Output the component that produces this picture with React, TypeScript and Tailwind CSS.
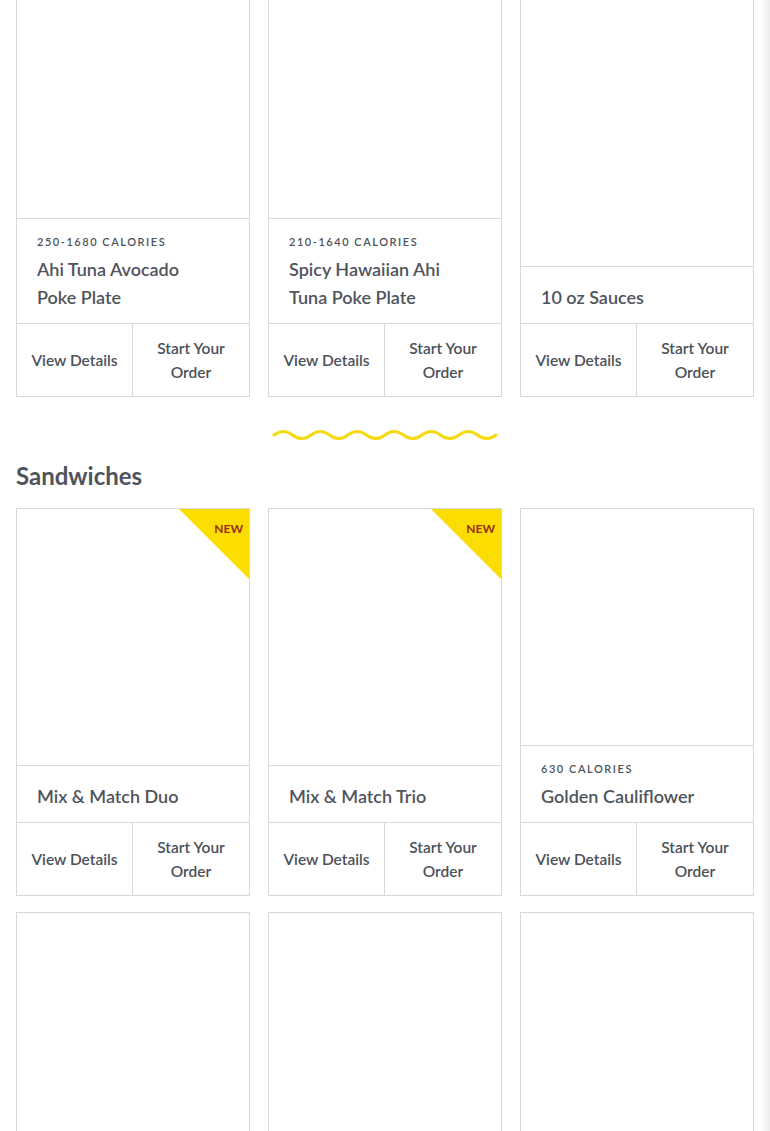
import React from "react";

type Item = { cal?: string; title: string[]; isNew?: boolean };

const row1: Item[] = [
  { cal: "250-1680 CALORIES", title: ["Ahi Tuna Avocado", "Poke Plate"] },
  { cal: "210-1640 CALORIES", title: ["Spicy Hawaiian Ahi", "Tuna Poke Plate"] },
  { title: ["10 oz Sauces"] },
];

const row2: Item[] = [
  { title: ["Mix & Match Duo"], isNew: true },
  { title: ["Mix & Match Trio"], isNew: true },
  { cal: "630 CALORIES", title: ["Golden Cauliflower"] },
];

function Card({ item }: { item: Item }) {
  return (
    <div className="relative flex flex-col border border-[#d8d8d8] bg-white">
      {item.isNew && (
        <div className="absolute right-0 top-0 h-[70px] w-[70px] bg-[#fbdd00] [clip-path:polygon(0_0,100%_0,100%_100%)]">
          <span className="absolute right-[6px] top-[14px] text-[12px] font-bold leading-[12px] text-[#9a2e1c]">
            NEW
          </span>
        </div>
      )}
      <div className="min-h-[236px] flex-1" />
      <div className="border-t border-[#d8d8d8] pb-3 pl-5 pr-3 pt-4">
        {item.cal && (
          <div className="mb-[6px] text-[11px] font-semibold leading-[14px] tracking-[0.14em] text-[#4e525a]">
            {item.cal}
          </div>
        )}
        {item.title.map((t) => (
          <div key={t} className="text-[18px] font-semibold leading-[28px] text-[#50545c]">
            {t}
          </div>
        ))}
      </div>
      <div className="flex h-[73px] border-t border-[#d8d8d8] text-[15.5px] font-semibold leading-[24px] text-[#4d5159]">
        <div className="flex w-1/2 items-center justify-center border-r border-[#d8d8d8] text-center">
          View Details
        </div>
        <div className="flex w-1/2 items-center justify-center text-center">
          Start Your
          <br />
          Order
        </div>
      </div>
    </div>
  );
}

function Wave() {
  const period = 37;
  const n = 6;
  let d = "M 2 6";
  for (let i = 0; i < n; i++) {
    const x = 2 + i * period;
    d += ` Q ${x + period * 0.25} -1, ${x + period * 0.5} 6`;
    d += ` Q ${x + period * 0.75} 13, ${x + period} 6`;
  }
  return (
    <svg width="226" height="12" viewBox="0 0 226 12" className="block">
      <path d={d} fill="none" stroke="#f6d90f" strokeWidth="3" strokeLinecap="round" />
    </svg>
  );
}

export default function App() {
  return (
    <div
      className="relative min-h-[1131px] overflow-hidden bg-white"
      style={{ fontFamily: "Lato, 'Noto Sans', sans-serif" }}
    >
      <div className="px-4">
        <div className="-mt-[19px] grid grid-cols-3 gap-[18px]">
          {row1.map((it) => (
            <Card key={it.title.join()} item={it} />
          ))}
        </div>
        <div className="mt-[32px] grid grid-cols-3 gap-[18px]">
          <div />
          <div className="flex justify-center">
            <Wave />
          </div>
          <div />
        </div>
        <h2 className="mt-[19px] text-[24px] font-bold leading-[32px] text-[#4f535b]">Sandwiches</h2>
        <div className="mt-[16px] grid grid-cols-3 gap-x-[18px] gap-y-[16px]">
          {row2.map((it) => (
            <Card key={it.title.join()} item={it} />
          ))}
          {[0, 1, 2].map((i) => (
            <div key={i} className="h-[260px] border border-[#d8d8d8] bg-white" />
          ))}
        </div>
      </div>
      <div className="pointer-events-none absolute bottom-0 right-0 top-0 w-[9px] bg-gradient-to-r from-white to-[#ececec]" />
    </div>
  );
}
